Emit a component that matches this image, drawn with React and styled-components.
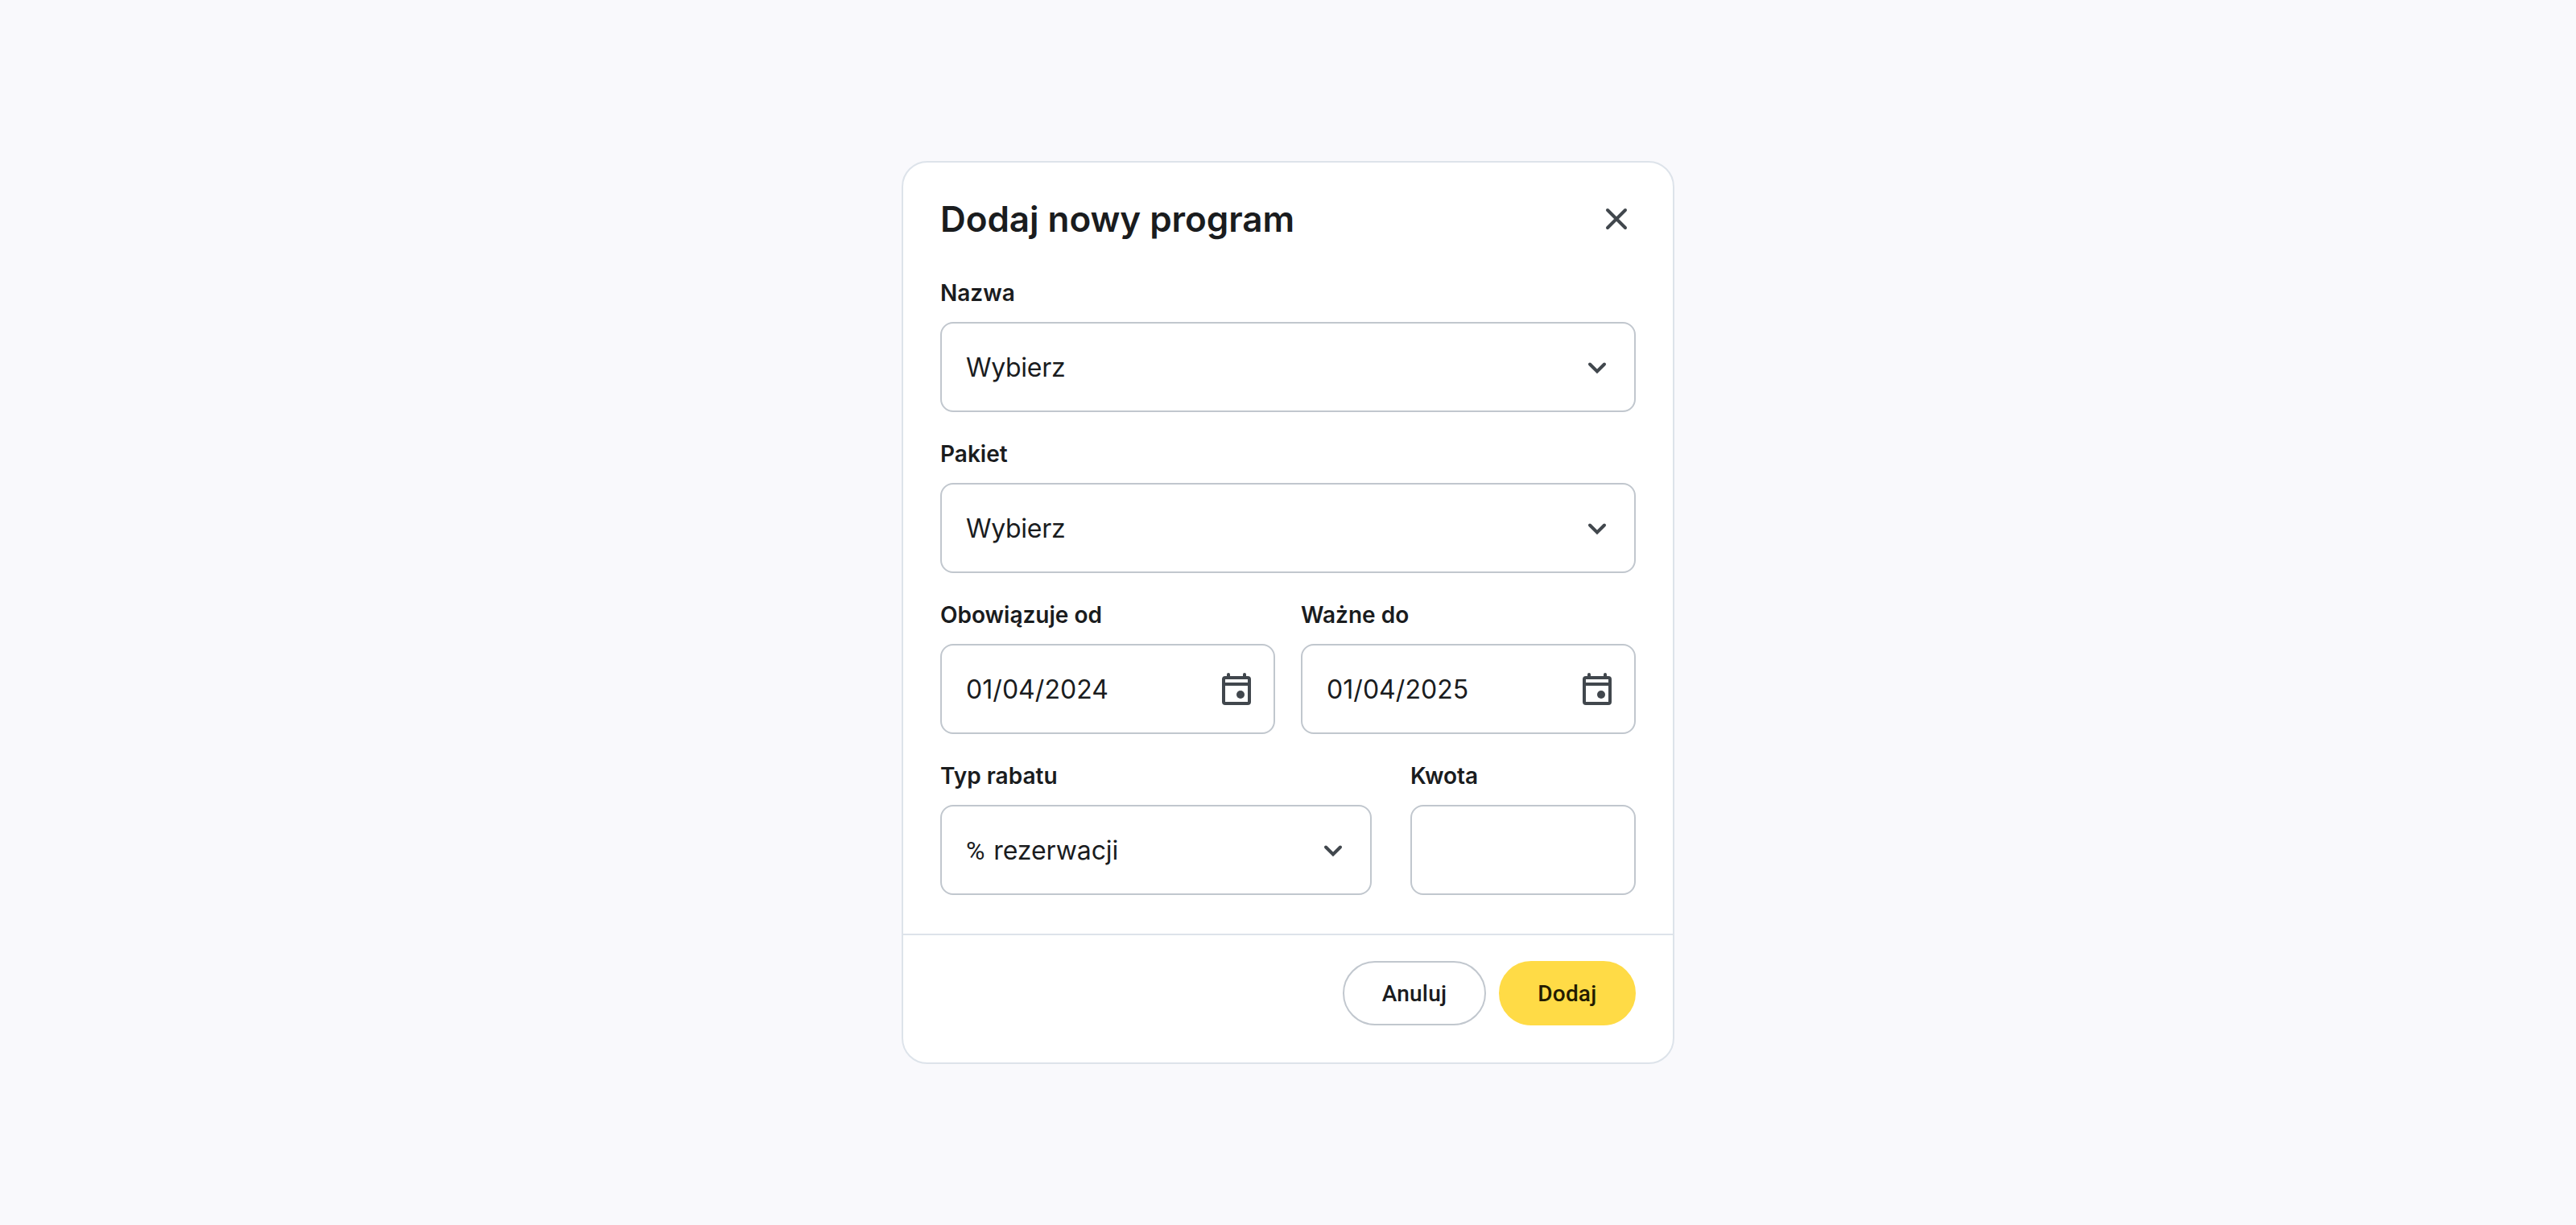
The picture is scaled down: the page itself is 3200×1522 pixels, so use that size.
import styled, { createGlobalStyle, css } from 'styled-components';

const colors = {
  page: '#f9f9fc',
  surface: '#ffffff',
  text: '#1a1c1e',
  icon: '#41474d',
  outline: '#c1c7ce',
  divider: '#dde3ea',
  primary: '#ffdb46',
  onPrimary: '#231b00',
};

const GlobalStyle = createGlobalStyle`
  *, *::before, *::after {
    box-sizing: border-box;
  }

  body {
    margin: 0;
    background-color: ${colors.page};
    color: ${colors.text};
    font-family: Inter, sans-serif;
  }
`;

const Page = styled.main`
  display: flex;
  align-items: center;
  justify-content: center;
  min-height: 100vh;
`;

const Dialog = styled.section`
  width: 960px;
  border: 2px solid ${colors.divider};
  border-radius: 32px;
  background-color: ${colors.surface};
`;

const Header = styled.header`
  display: flex;
  align-items: center;
  justify-content: space-between;
  padding: 46px 46px 48px;
`;

const Title = styled.h2`
  margin: 0;
  font-size: 44px;
  font-weight: 600;
  letter-spacing: -0.06px;
  line-height: 48px;
`;

const IconButton = styled.button`
  display: flex;
  padding: 0;
  border: none;
  background: none;
  color: ${colors.icon};
`;

const Form = styled.form`
  display: flex;
  flex-direction: column;
  gap: 32px;
  padding: 0 46px 48px;
`;

const Row = styled.div`
  display: grid;
  grid-template-columns: ${({ $columns }) => $columns};
  gap: ${({ $gap }) => $gap};
`;

const FieldWrapper = styled.div`
  display: flex;
  flex-direction: column;
  gap: 16px;
`;

const Label = styled.span`
  font-size: 28px;
  font-weight: 600;
  line-height: 40px;
`;

const Control = styled.div`
  display: flex;
  align-items: center;
  justify-content: space-between;
  height: 112px;
  padding: 0 22px 0 30px;
  border: 2px solid ${colors.outline};
  border-radius: 16px;
  color: ${colors.icon};
`;

const Value = styled.span`
  padding-top: 2px;
  color: ${colors.text};
  font-size: 32px;
  letter-spacing: ${({ $spacing = '-0.3px' }) => $spacing};
  line-height: 48px;
`;

const Unit = styled.span`
  font-family: Roboto, sans-serif;
  letter-spacing: 2px;
`;

const Footer = styled.footer`
  display: flex;
  justify-content: flex-end;
  gap: 16px;
  padding: 32px 46px 46px;
  border-top: 2px solid ${colors.divider};
`;

const Button = styled.button`
  height: 80px;
  padding: 2px 46.6px 0;
  border: 2px solid ${colors.outline};
  border-radius: 40px;
  background-color: ${colors.surface};
  color: ${colors.text};
  font-family: Roboto, sans-serif;
  font-size: 28px;
  font-weight: 500;
  letter-spacing: 0.2px;
  line-height: 40px;

  ${({ $primary }) =>
    $primary &&
    css`
      border-color: ${colors.primary};
      background-color: ${colors.primary};
      color: ${colors.onPrimary};
    `}
`;

const Icon = styled.svg`
  flex: none;
  width: 48px;
  height: 48px;
`;

function CloseIcon() {
  return (
    <Icon viewBox="0 0 48 48" fill="none" stroke="currentColor" strokeWidth="4" strokeLinecap="round">
      <path d="M13 13L35 35M35 13L13 35" />
    </Icon>
  );
}

function ChevronIcon() {
  return (
    <Icon viewBox="0 0 48 48" fill="none" stroke="currentColor" strokeWidth="4" strokeLinecap="round">
      <path d="M15 20.5L24 29.5L33 20.5" />
    </Icon>
  );
}

function CalendarIcon() {
  return (
    <Icon viewBox="0 0 48 48" fill="none" stroke="currentColor" strokeWidth="4">
      <rect x="8" y="10" width="32" height="32" rx="2" />
      <path d="M8 18H40" />
      <path d="M14 9V6M34 9V6" strokeLinecap="round" />
      <circle cx="29" cy="31" r="5" fill="currentColor" stroke="none" />
    </Icon>
  );
}

function Field({ label, value, icon, spacing }) {
  return (
    <FieldWrapper>
      <Label>{label}</Label>
      <Control>
        <Value $spacing={spacing}>{value}</Value>
        {icon}
      </Control>
    </FieldWrapper>
  );
}

export default function App() {
  return (
    <>
      <GlobalStyle />
      <Page>
        <Dialog>
          <Header>
            <Title>Dodaj nowy program</Title>
            <IconButton type="button" aria-label="Zamknij">
              <CloseIcon />
            </IconButton>
          </Header>
          <Form>
            <Field label="Nazwa" value="Wybierz" icon={<ChevronIcon />} />
            <Field label="Pakiet" value="Wybierz" icon={<ChevronIcon />} />
            <Row $columns="1fr 1fr" $gap="32px">
              <Field label="Obowiązuje od" value="01/04/2024" icon={<CalendarIcon />} spacing="0.05px" />
              <Field label="Ważne do" value="01/04/2025" icon={<CalendarIcon />} spacing="0.05px" />
            </Row>
            <Row $columns="1fr 280px" $gap="48px">
              <Field
                label="Typ rabatu"
                value={<><Unit>%</Unit> rezerwacji</>}
                icon={<ChevronIcon />}
                spacing="-0.1px"
              />
              <Field label="Kwota" />
            </Row>
          </Form>
          <Footer>
            <Button type="button">Anuluj</Button>
            <Button type="button" $primary>Dodaj</Button>
          </Footer>
        </Dialog>
      </Page>
    </>
  );
}
